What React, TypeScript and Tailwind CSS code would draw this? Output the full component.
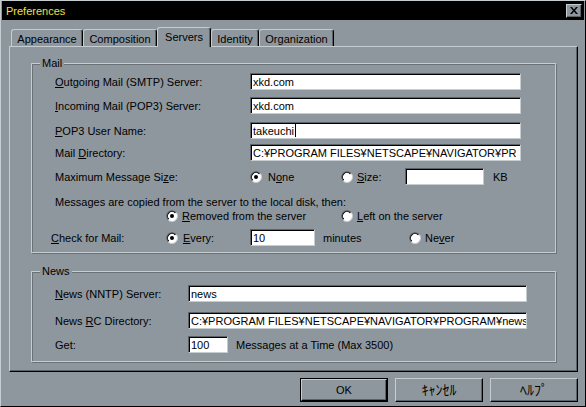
import React from "react";

const LIGHT = "#c5cdd1";

function Radio({ checked }: { checked?: boolean }) {
  return (
    <svg width="12" height="12" viewBox="0 0 12 12" className="shrink-0">
      <circle cx="6" cy="6" r="5.5" fill="#ffffff" stroke={LIGHT} strokeWidth="1" />
      <circle
        cx="6"
        cy="6"
        r="5.5"
        fill="none"
        stroke="#5b6268"
        strokeWidth="1"
        strokeDasharray="17.3 17.3"
        transform="rotate(135 6 6)"
      />
      <circle
        cx="6"
        cy="6"
        r="4.5"
        fill="none"
        stroke="#000000"
        strokeWidth="1"
        strokeDasharray="14.1 14.1"
        transform="rotate(135 6 6)"
      />
      {checked && <circle cx="6" cy="6" r="2" fill="#000000" />}
    </svg>
  );
}

function Field({ w, value, cursor }: { w: string; value?: string; cursor?: boolean }) {
  return (
    <div
      className={`${w} h-[17px] shrink-0 bg-white border border-t-[#5b6268] border-l-[#5b6268] border-r-[#c5cdd1] border-b-[#c5cdd1] shadow-[inset_1px_1px_0_#000] flex items-center pl-[2px] overflow-hidden whitespace-nowrap`}
    >
      <span>{value}</span>
      {cursor && <span className="inline-block w-[1px] h-[13px] bg-black ml-[1px]" />}
    </div>
  );
}

function Tab({ label, w, selected }: { label: string; w: string; selected?: boolean }) {
  if (selected) {
    return (
      <div
        className={`${w} h-[20px] -mb-[1px] relative z-10 bg-[#8f979e] border-t border-l border-r border-t-[#c5cdd1] border-l-[#c5cdd1] border-r-black rounded-t-[3px] flex justify-center pt-[2px] shadow-[inset_-1px_0_0_#5b6268]`}
      >
        {label}
      </div>
    );
  }
  return (
    <div
      className={`${w} h-[17px] border-t border-l border-r border-t-[#c5cdd1] border-l-[#c5cdd1] border-r-black rounded-t-[3px] flex justify-center pt-[2px] shadow-[inset_-1px_0_0_#5b6268]`}
    >
      {label}
    </div>
  );
}

function Btn({ children, def }: { children: React.ReactNode; def?: boolean }) {
  if (def) {
    return (
      <div className="w-[88px] h-[24px] border border-black">
        <div className="w-full h-full border border-t-[#c5cdd1] border-l-[#c5cdd1] border-r-black border-b-black shadow-[inset_-1px_-1px_0_#5b6268] flex items-center justify-center">
          {children}
        </div>
      </div>
    );
  }
  return (
    <div className="w-[88px] h-[24px] border border-t-[#c5cdd1] border-l-[#c5cdd1] border-r-black border-b-black shadow-[inset_-1px_-1px_0_#5b6268] flex items-center justify-center">
      {children}
    </div>
  );
}

function Group({ title, h, children, className }: { title: string; h: string; children: React.ReactNode; className?: string }) {
  return (
    <div
      className={`relative w-[525px] ${h} border border-t-[#c5cdd1] border-l-[#c5cdd1] border-r-[#c5cdd1] border-b-[#c5cdd1] shadow-[inset_1px_1px_0_#6a7278,1px_1px_0_#6a7278] ${className ?? ""}`}
    >
      <div className="absolute left-[8px] -top-[8px] px-[2px] bg-[#8f979e] leading-[14px]">{title}</div>
      {children}
    </div>
  );
}

export default function App() {
  return (
    <div className="w-[586px] h-[407px] overflow-hidden bg-[#8f979e] border border-t-[#c5cdd1] border-l-[#c5cdd1] border-r-black border-b-black font-['Liberation_Sans','Noto_Sans_CJK_JP',sans-serif] text-[11px] leading-[14px] text-black">
      {/* Title bar */}
      <div className="h-[19px] mx-[1px] bg-black flex items-center justify-between pl-[4px] pr-[2px]">
        <span className="text-[#f0e040] text-[11px]">Preferences</span>
        <div className="w-[16px] h-[14px] bg-[#8f979e] border border-t-[#c5cdd1] border-l-[#c5cdd1] border-r-black border-b-black shadow-[inset_-1px_-1px_0_#5b6268] flex items-center justify-center">
          <svg width="8" height="7" viewBox="0 0 8 7">
            <path d="M0 0h2l2 2.5L6 0h2L5 3.5 8 7H6L4 4.5 2 7H0l3-3.5z" fill="#000" />
          </svg>
        </div>
      </div>

      {/* Tabs */}
      <div className="mt-[7px] ml-[10px] h-[19px] flex items-end">
        <Tab label="Appearance" w="w-[72px]" />
        <Tab label="Composition" w="w-[74px]" />
        <Tab label="Servers" w="w-[54px]" selected />
        <Tab label="Identity" w="w-[48px]" />
        <Tab label="Organization" w="w-[75px]" />
      </div>

      {/* Panel */}
      <div className="ml-[8px] w-[569px] h-[326px] border border-t-[#c5cdd1] border-l-[#c5cdd1] border-r-black border-b-black shadow-[inset_-1px_-1px_0_#5b6268]">
        <div className="ml-[21px] mt-[16px]">
          <Group title="Mail" h="h-[190px]">
            <div className="pl-[23px] pt-[9px]">
              <div className="h-[17px] flex items-center">
                <div className="w-[195px]"><u>O</u>utgoing Mail (SMTP) Server:</div>
                <Field w="w-[271px]" value="xkd.com" />
              </div>
              <div className="h-[17px] mt-[7px] flex items-center">
                <div className="w-[195px]"><u>I</u>ncoming Mail (POP3) Server:</div>
                <Field w="w-[271px]" value="xkd.com" />
              </div>
              <div className="h-[17px] mt-[8px] flex items-center">
                <div className="w-[195px]"><u>P</u>OP3 User Name:</div>
                <Field w="w-[271px]" value="takeuchi" cursor />
              </div>
              <div className="h-[17px] mt-[5px] flex items-center">
                <div className="w-[195px]">Mail <u>D</u>irectory:</div>
                <Field w="w-[271px]" value="C:¥PROGRAM FILES¥NETSCAPE¥NAVIGATOR¥PR" />
              </div>
              <div className="h-[17px] mt-[7px] flex items-center">
                <div className="w-[195px]">Maximum Message Si<u>z</u>e:</div>
                <div className="w-[91px] flex items-center gap-[6px]">
                  <Radio checked />
                  <span>N<u>o</u>ne</span>
                </div>
                <div className="w-[64px] flex items-center gap-[4px]">
                  <Radio />
                  <span><u>S</u>ize:</span>
                </div>
                <Field w="w-[79px]" />
                <span className="ml-[9px]">KB</span>
              </div>
              <div className="h-[14px] mt-[10px]">Messages are copied from the server to the local disk, then:</div>
              <div className="h-[14px] flex items-center pl-[111px]">
                <div className="w-[175px] flex items-center gap-[4px]">
                  <Radio checked />
                  <span><u>R</u>emoved from the server</span>
                </div>
                <div className="flex items-center gap-[4px]">
                  <Radio />
                  <span><u>L</u>eft on the server</span>
                </div>
              </div>
            </div>
            <div className="pl-[19px] h-[17px] mt-[6px] flex items-center">
              <div className="w-[115px]"><u>C</u>heck for Mail:</div>
              <div className="w-[84px] flex items-center gap-[5px]">
                <Radio checked />
                <span><u>E</u>very:</span>
              </div>
              <Field w="w-[65px]" value="10" />
              <div className="w-[94px] pl-[8px]">minutes</div>
              <div className="flex items-center gap-[4px]">
                <Radio />
                <span>Ne<u>v</u>er</span>
              </div>
            </div>
          </Group>

          <Group title="News" h="h-[91px]" className="mt-[18px]">
            <div className="pl-[23px] pt-[13px]">
              <div className="h-[17px] flex items-center">
                <div className="w-[133px]"><u>N</u>ews (NNTP) Server:</div>
                <Field w="w-[339px]" value="news" />
              </div>
              <div className="h-[17px] mt-[10px] flex items-center">
                <div className="w-[133px]">News <u>R</u>C Directory:</div>
                <Field w="w-[339px]" value="C:¥PROGRAM FILES¥NETSCAPE¥NAVIGATOR¥PROGRAM¥news" />
              </div>
              <div className="h-[17px] mt-[7px] flex items-center">
                <div className="w-[133px]">Get:</div>
                <Field w="w-[40px]" value="100" />
                <span className="ml-[8px]">Messages at a Time (Max 3500)</span>
              </div>
            </div>
          </Group>
        </div>
      </div>

      {/* Buttons */}
      <div className="mt-[6px] ml-[299px] flex gap-[7px]">
        <Btn def>OK</Btn>
        <Btn><span className="text-[14px]">ｷｬﾝｾﾙ</span></Btn>
        <Btn><span className="text-[14px]">ﾍﾙﾌﾟ</span></Btn>
      </div>
    </div>
  );
}
